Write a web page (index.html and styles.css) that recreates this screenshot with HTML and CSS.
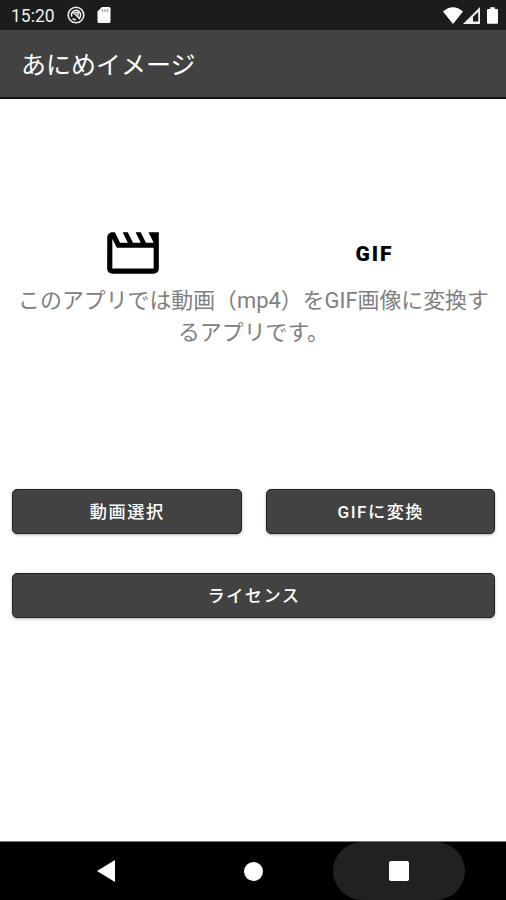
FILE: index.html
```html
<!DOCTYPE html>
<html lang="ja">
<head>
    <meta charset="UTF-8">
    <meta name="viewport" content="width=device-width, initial-scale=1.0">
    <title>あにめイメージ</title>
    <link rel="stylesheet" href="styles.css">
</head>
<body>
    <div class="status-bar">
        <span class="clock">15:20</span>
        <svg class="status-app" width="18" height="18" viewBox="0 0 18 18">
            <circle cx="9" cy="9" r="7.8" fill="none" stroke="#eee" stroke-width="1.6"/>
            <path d="M4.8 10.5A4.6 4.6 0 0 1 12 5.4A4.6 4.6 0 0 1 11.5 12.8M5.5 12.5A4.6 4.6 0 0 0 9 13.6M5.5 5.5l7.5 7.5M8 6.5h3v3" fill="none" stroke="#eee" stroke-width="1.6"/>
        </svg>
        <svg class="status-card" width="14" height="16" viewBox="0 0 14 16">
            <path d="M5 0h7a1.5 1.5 0 0 1 1.5 1.5v13A1.5 1.5 0 0 1 12 16H2a1.5 1.5 0 0 1-1.5-1.5V4.5z" fill="#fff"/>
            <path d="M5.5 2v3M8 2v3M10.5 2v3" stroke="#999" stroke-width="1.2"/>
        </svg>
        <div class="status-right">
            <svg width="20" height="17" viewBox="0 0 20 17">
                <path d="M0 4.5Q10-4 20 4.5L10 17z" fill="#fff"/>
            </svg>
            <svg width="17" height="17" viewBox="0 0 17 17">
                <path d="M17 0v17H0z" fill="#eee"/>
                <path d="M15.2 5v9.5H10V9.7z" fill="#1c1c1c"/>
            </svg>
            <svg class="battery" width="11" height="17" viewBox="0 0 12 18">
                <path d="M3.5 0h5v2H11a1 1 0 0 1 1 1v14a1 1 0 0 1-1 1H1a1 1 0 0 1-1-1V3a1 1 0 0 1 1-1h2.5z" fill="#fff"/>
            </svg>
        </div>
    </div>

    <header class="app-bar">あにめイメージ</header>

    <main class="content">
        <div class="icons">
            <div class="icon-cell">
                <svg width="62" height="62" viewBox="0 0 24 24">
                    <path d="M4 6.47L5.76 10H20v8H4V6.47M22 4h-4l2 4h-3l-2-4h-2l2 4h-3l-2-4H8l2 4H7L5 4H4c-1.1 0-1.99.9-1.99 2L2 18c0 1.1.9 2 2 2h16c1.1 0 2-.9 2-2V4z"/>
                </svg>
            </div>
            <div class="icon-cell"><span class="gif">GIF</span></div>
        </div>
        <p class="description">このアプリでは動画（mp4）をGIF画像に変換す<br>るアプリです。</p>
        <div class="buttons">
            <button class="btn">動画選択</button>
            <button class="btn">GIFに変換</button>
            <button class="btn wide">ライセンス</button>
        </div>
    </main>

    <nav class="nav-bar">
        <span class="nav-item">
            <svg width="18" height="22" viewBox="0 0 18 22"><path d="M18 0v22L0 11z" fill="#fff"/></svg>
        </span>
        <span class="nav-item"><span class="nav-home"></span></span>
        <span class="nav-item pressed"><span class="nav-recent"></span></span>
    </nav>
</body>
</html>
```
FILE: styles.css
```css
* {
    box-sizing: border-box;
}

body {
    margin: 0;
    height: 900px;
    display: flex;
    flex-direction: column;
    overflow: hidden;
    background-color: #fff;
    font-family: Roboto, "Noto Sans CJK JP", sans-serif;
}

svg {
    display: block;
}

/* Status bar */
.status-bar {
    height: 30px;
    padding: 0 8px 0 11px;
    display: flex;
    align-items: center;
    background-color: #1c1c1c;
    color: #eee;
}

.clock {
    width: 56px;
    font-size: 17.5px;
    line-height: 30px;
    padding-top: 2px;
}

.status-card {
    margin-left: 12px;
}

.status-right {
    display: flex;
    align-items: center;
    margin-left: auto;
}

.battery {
    margin-left: 7px;
}

/* Title bar */
.app-bar {
    height: 69px;
    padding: 2px 0 0 21px;
    background-color: #424242;
    border-bottom: 2px solid #111;
    color: #fff;
    font-size: 25px;
    line-height: 68px;
}

.content {
    flex: 1;
    padding-top: 123px;
}

.icons {
    display: flex;
    padding: 0 12px;
}

.icon-cell {
    flex: 1;
    display: flex;
    align-items: center;
    justify-content: center;
}

.gif {
    padding: 2px 0 0 2px;
    font-size: 21px;
    font-weight: 900;
    letter-spacing: 2px;
    color: #000;
}

.description {
    margin: 0;
    padding: 1px 0 0 1px;
    color: #808080;
    font-size: 21.9px;
    font-weight: 400;
    line-height: 32px;
    text-align: center;
    white-space: nowrap;
}

/* Buttons */
.buttons {
    display: grid;
    grid-template-columns: 1fr 1fr;
    gap: 39px 24px;
    padding: 0 11px 0 12px;
    margin-top: 140px;
}

.btn {
    height: 45px;
    padding: 0 0 3px 1px;
    border: 1px solid #222;
    border-radius: 5px;
    background-color: #424242;
    box-shadow: 0 1px 3px rgba(0, 0, 0, 0.3);
    color: #fff;
    font-family: inherit;
    font-size: 17.2px;
    font-weight: 500;
    letter-spacing: 1.5px;
}

.wide {
    grid-column: 1 / 3;
}

/* Navigation bar */
.nav-bar {
    height: 59px;
    padding: 0 34px;
    display: flex;
    justify-content: center;
    gap: 14px;
    border-top: 1px solid #777;
    background-color: #000;
}

.nav-item {
    width: 132px;
    display: flex;
    align-items: center;
    justify-content: center;
}

.nav-item svg {
    margin-right: 2px;
}

.pressed {
    border-radius: 29px;
    background-color: #212121;
}

.nav-home {
    width: 19px;
    height: 19px;
    border-radius: 50%;
    background-color: #fff;
}

.nav-recent {
    width: 20px;
    height: 20px;
    border-radius: 2px;
    background-color: #fff;
}
```
